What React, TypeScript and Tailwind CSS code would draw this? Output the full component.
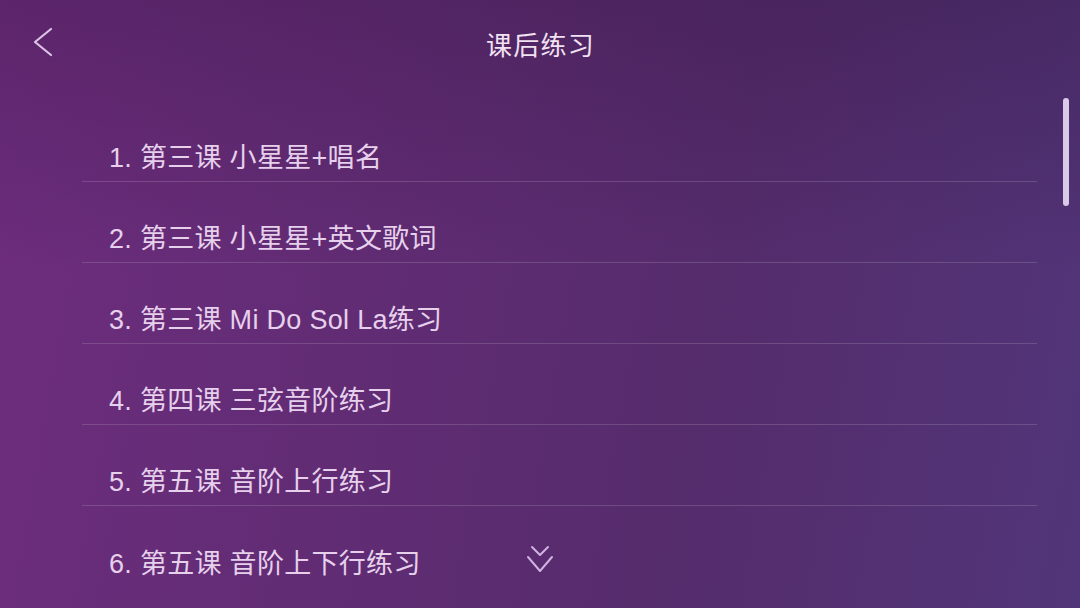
const lessons = [
  "1. 第三课 小星星+唱名",
  "2. 第三课 小星星+英文歌词",
  "3. 第三课 Mi Do Sol La练习",
  "4. 第四课 三弦音阶练习",
  "5. 第五课 音阶上行练习",
  "6. 第五课 音阶上下行练习",
];

function App() {
  return (
    <div
      className="relative w-[1080px] h-[608px] overflow-hidden bg-[linear-gradient(180deg,rgba(30,8,40,0.22)_0%,rgba(30,8,40,0)_45%),linear-gradient(100deg,#6e2d7e_0%,#612c74_35%,#552c6c_65%,#513579_100%)] text-[#e6d0ec]"
      style={{ fontFamily: '"Liberation Sans", "Noto Sans CJK SC", sans-serif' }}
    >
      <header className="relative h-[91px] flex items-center justify-center">
        <button className="absolute left-[30px] top-[24px] p-[2px]">
          <svg width="24" height="32" viewBox="0 0 24 32" fill="none">
            <path d="M19 3L3 16L19 29" stroke="#dcc4e6" strokeWidth="2.2" strokeLinecap="round" strokeLinejoin="round" />
          </svg>
        </button>
        <h1 className="text-[26px] leading-none text-[#f0e2f2] tracking-[1.2px] pl-[1px]">课后练习</h1>
      </header>

      <div className="pt-[10px] pl-[82px] pr-[43px] flex flex-col">
        {lessons.map((title, i) => (
          <div
            key={title}
            className={`h-[81px] flex items-end pb-[9px] pl-[27px] ${
              i < lessons.length - 1 ? "border-b border-[#ffffff26]" : ""
            }`}
          >
            <span className="text-[27px] leading-[28px] tracking-[0.3px]">{title}</span>
          </div>
        ))}
      </div>

      {/* scroll thumb */}
      <div className="absolute left-[1063px] top-[98px] w-[6px] h-[108px] rounded-full bg-[#d9cbe8]" />

      {/* more indicator */}
      <div className="absolute left-[525px] top-[544px]">
        <svg width="30" height="32" viewBox="0 0 30 32" fill="none">
          <path d="M7 3L15 11L23 3" stroke="#cfb3e0" strokeWidth="2" strokeLinecap="round" strokeLinejoin="round" />
          <path d="M3 13L15 27L27 13" stroke="#cfb3e0" strokeWidth="2" strokeLinecap="round" strokeLinejoin="round" />
        </svg>
      </div>
    </div>
  );
}

export default App;
